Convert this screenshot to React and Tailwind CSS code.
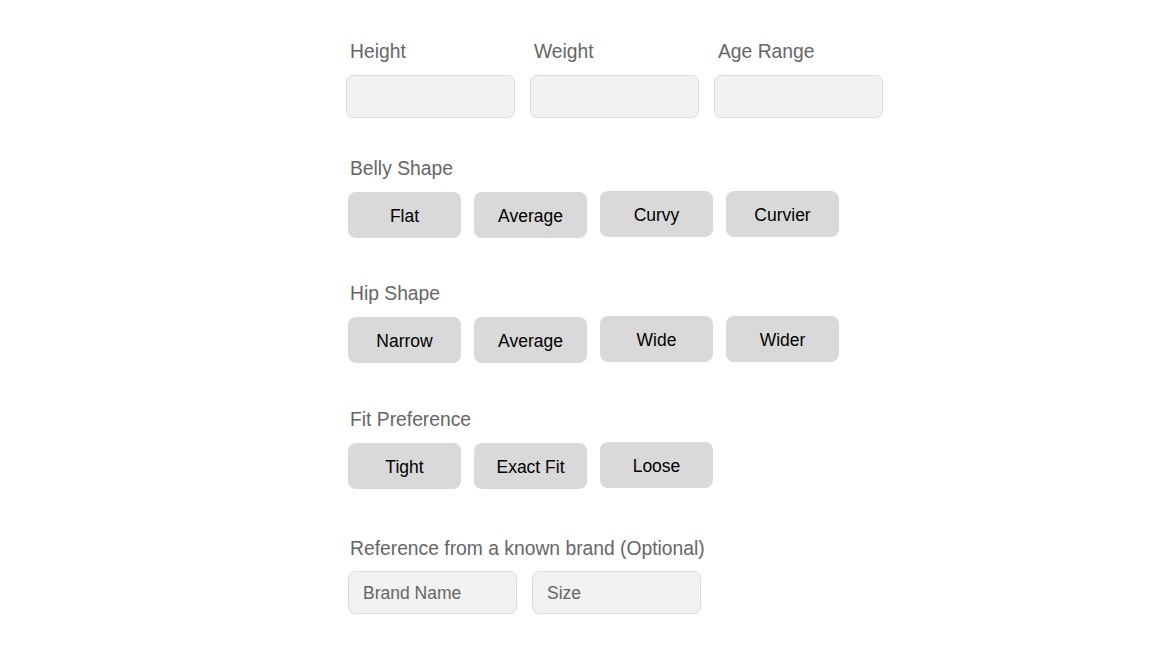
import React from "react";

const font = { fontFamily: '"Liberation Sans", Arial, sans-serif' };

function Label({ children, className = "" }) {
  return (
    <div className={"h-[22px] pl-[4px] text-[19.3px] leading-[22px] text-[#666] " + className}>
      {children}
    </div>
  );
}

function ChoiceRow({ items }) {
  return (
    <div className="mt-[12px] flex items-start gap-[13px] pl-[2px]">
      {items.map((t, i) => (
        <button
          key={t}
          className={
            "flex h-[46px] w-[113px] items-center justify-center rounded-[8px] bg-[#d9d9d9] pt-[2px] text-[17.5px] text-black " +
            (i >= 2 ? "mt-[-1px]" : "")
          }
        >
          {t}
        </button>
      ))}
    </div>
  );
}

export default function App() {
  return (
    <div className="min-h-[649px] w-full bg-white" style={font}>
      <div className="ml-[346px] flex flex-col pt-[41px]">
        <div className="flex gap-[15px]">
          {["Height", "Weight", "Age Range"].map((l) => (
            <div key={l} className="flex w-[169px] flex-col">
              <Label>{l}</Label>
              <div className="mt-[12px] h-[43px] rounded-[7px] border border-[#dcdcdc] bg-[#f2f2f2]" />
            </div>
          ))}
        </div>

        <Label className="mt-[40px]">Belly Shape</Label>
        <ChoiceRow items={["Flat", "Average", "Curvy", "Curvier"]} />

        <Label className="mt-[45px]">Hip Shape</Label>
        <ChoiceRow items={["Narrow", "Average", "Wide", "Wider"]} />

        <Label className="mt-[46px]">Fit Preference</Label>
        <ChoiceRow items={["Tight", "Exact Fit", "Loose"]} />

        <Label className="mt-[49px]">Reference from a known brand (Optional)</Label>
        <div className="mt-[11px] flex gap-[15px] pl-[2px]">
          {["Brand Name", "Size"].map((p) => (
            <div
              key={p}
              className="flex h-[43px] w-[169px] items-center rounded-[7px] border border-[#dcdcdc] bg-[#f2f2f2] px-[14px] pt-[1px] text-[17.5px] text-[#666]"
            >
              {p}
            </div>
          ))}
        </div>
      </div>
    </div>
  );
}
